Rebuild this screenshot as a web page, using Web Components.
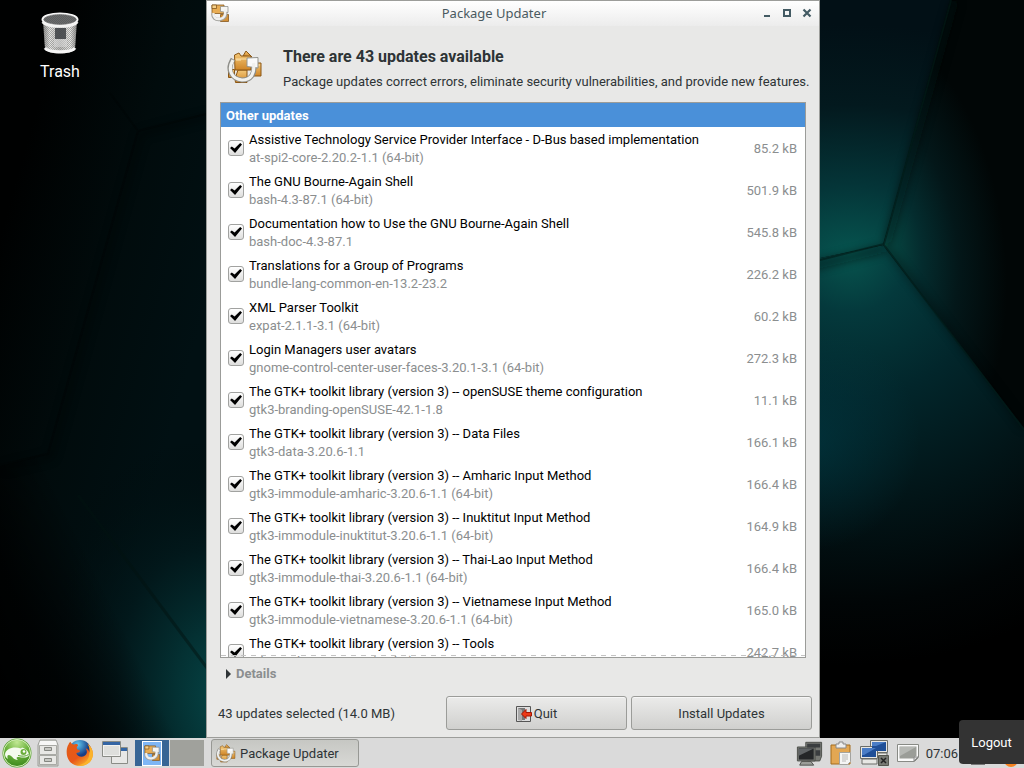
<!DOCTYPE html>
<html lang="en">
<head>
<meta charset="utf-8">
<title>Package Updater</title>
<style>
  html, body { margin: 0; height: 100%; }
  body { background: #000; font: 13px/18px Roboto, "Liberation Sans", sans-serif; font-variant-ligatures: none; color: #2e3436; overflow: hidden; }
</style>
</head>
<body>
<desk-top>
  <desk-shortcut icon="trash">Trash</desk-shortcut>
  <app-window slot="window" heading="Package Updater" icon="update">
    <updater-header heading="There are 43 updates available">Package updates correct errors, eliminate security vulnerabilities, and provide new features.</updater-header>
    <update-list heading="Other updates"></update-list>
    <details-toggle>Details</details-toggle>
    <action-bar>43 updates selected (14.0 MB)
      <push-button slot="actions" icon="exit">Quit</push-button>
      <push-button slot="actions">Install Updates</push-button>
    </action-bar>
  </app-window>
  <task-bar slot="panel"></task-bar>
</desk-top>

<script>
const define = (name, html, setup, observed = []) => {
  const template = document.createElement('template');
  template.innerHTML = html;
  customElements.define(name, class extends HTMLElement {
    static observedAttributes = observed;
    constructor() {
      super();
      this.attachShadow({ mode: 'open' }).append(template.content.cloneNode(true));
    }
    connectedCallback() { if (setup) setup(this, this.shadowRoot); }
    attributeChangedCallback() { if (this.isConnected) setup(this, this.shadowRoot); }
  });
};

const icons = {
  trash: ['0 0 40 44', `
    <defs>
      <pattern id="m" width="2" height="2" patternUnits="userSpaceOnUse"><path d="M0 0h1v1h-1zM1 1h1v1h-1z" fill="#777" opacity=".55"/></pattern>
      <linearGradient id="g"><stop offset="0" stop-color="#8c8c8a"/><stop offset=".2" stop-color="#e6e6e3"/><stop offset=".5" stop-color="#b9b9b6"/><stop offset=".8" stop-color="#e9e9e6"/><stop offset="1" stop-color="#858583"/></linearGradient>
    </defs>
    <path d="M3 9 L5 38 C8 44 32 44 35 38 L37 9Z" fill="url(#g)"/>
    <path d="M3 9 L5 38 C8 44 32 44 35 38 L37 9Z" fill="url(#m)"/>
    <path d="M15 17h11v11h-11z" fill="#3d4144" opacity=".85"/><path d="M14 28h13v8h-13z" fill="#ddd" opacity=".5"/>
    <path d="M5 37 C8 42 32 42 35 37" fill="none" stroke="#f6f6f6" stroke-width="3"/>
    <ellipse cx="20" cy="8.500" rx="17.500" ry="6" fill="#5d5f60" stroke="#f7f7f7" stroke-width="2"/>
    <ellipse cx="20" cy="8.500" rx="16" ry="5" fill="url(#m)" stroke="#777" stroke-width=".6"/>
    <path d="M2.500 11 C7 17 33 17 37.500 11" fill="none" stroke="#f3f3f2" stroke-width="2.500"/>`],
  packages: ['0 0 36 36', `
    <defs><linearGradient id="o" x2="0" y2="1"><stop offset="0" stop-color="#f4c878"/><stop offset="1" stop-color="#cf8527"/></linearGradient></defs>
    <g fill="url(#o)" stroke="#8a5716" stroke-width="1">
      <path d="M1.500 19.500h6v8h-6z"/><path d="M27 13h7v13h-7z"/><path d="M8 29 L11 20 H20 V32.500 H8.500Z"/><path d="M16 6 L19 1 L25 7Z"/>
      <path d="M7.500 5 L12 3 L14 6 L24 6 V20 H8 Z"/>
    </g>
    <path d="M8.500 9h14M9 10h5M28 15h5" stroke="#fbe3ae" stroke-width="1"/>
    <path d="M6 9 C-1 20 5 29 15 30 C24 30 28 24 27 14" fill="none" stroke="#8d8d88" stroke-width="5"/>
    <path d="M20 16.500 V8 L31 7.500 V18 Z" fill="#fafafa" stroke="#92928c" stroke-width="1"/>
    <path d="M6 10 C0 20 5 29 15 30 C24 30 28 24 26.500 13" fill="none" stroke="#f1f1ee" stroke-width="3.200"/>`],
  update: ['0 0 36 36', `
    <g stroke="#7f5117" stroke-width="1.500"><path d="M2 2h24v17h-24z" fill="#e8ad55"/><path d="M2 2h9v7h-9z" fill="#f5d08a"/><path d="M19 21h16v14h-16z" fill="#d39138"/></g>
    <path d="M26 5v13" stroke="#fbe3ae"/><path d="M4 19 C3 27 9 32 17 31 C27 30 31 24 29 13" fill="none" stroke="#a2a29d" stroke-width="7"/>
    <path d="M19 15V5h15v12Z" fill="#f5f5f3" stroke="#8b8b85" stroke-width="1.500"/>
    <path d="M5 18 C4 27 10 31 17 30 C26 29 30 23 28 11" fill="none" stroke="#f0f0ee" stroke-width="5"/>`],
  exit: ['0 0 16 16', `
    <path d="M.5 .5h14v15h-14z" fill="#ddd" stroke="#555"/><path d="M2 2h7v12h-7z" fill="#777"/><path d="M2 2 L6 4 V15 L2 14Z" fill="#aaa"/>
    <path d="M5.500 8 L10 3.500 V6.500 H15.500 V10 H10 V12.500Z" fill="#ee3a17" stroke="#a31605"/>`],
  suse: ['0 0 30 30', `
    <defs><radialGradient id="s" cx=".5" cy=".1" r=".9"><stop offset="0" stop-color="#c1e894"/><stop offset=".5" stop-color="#6db33e"/><stop offset="1" stop-color="#3d8a1d"/></radialGradient></defs>
    <circle cx="15" cy="15" r="14.500" fill="#56a02c"/><circle cx="15" cy="15" r="13.500" fill="url(#s)" stroke="#d6efbd"/>
    <path d="M3 16 C4 11 11 8 19 10.500 L20 9.500 C24 11 26.500 13 27 17 C26 20 22 20 17 19 C14 18.500 14 20 16 22 C11 22 11 18 7 17 C5 17 5 19 6 21 C4 20 3 18 3 16Z" fill="#f5fbef"/>
    <circle cx="21.500" cy="14" r="3" fill="#6bae3c"/><circle cx="22" cy="13.500" r="1.300" fill="#fff"/><path d="M16 17.500 C20 18.500 24 18.500 26.500 16.500" fill="none" stroke="#58a030"/>`],
  cabinet: ['0 0 22 28', `
    <path d="M3 1h16l2 5v21h-20v-21z" fill="#d3d4d0" stroke="#9c9d98"/><path d="M3 2h16l1 4h-18z" fill="#f7f7f6"/>
    <g fill="#e8e8e5" stroke="#a8a9a4"><path d="M2.500 6.500h17v9h-17zM2.500 16.500h17v9h-17z"/></g>
    <g fill="#c6c7c2" stroke="#858681"><path d="M7.500 8.500h7v3h-7zM7.500 19.500h7v3h-7z"/></g>`],
  firefox: ['0 0 30 30', `
    <defs><radialGradient id="b" cx=".4" cy=".2"><stop offset="0" stop-color="#61c7ef"/><stop offset="1" stop-color="#173e87"/></radialGradient>
    <linearGradient id="f" x2=".8" y2="1"><stop offset="0" stop-color="#e25d16"/><stop offset=".6" stop-color="#e8571a"/><stop offset="1" stop-color="#fbc02d"/></linearGradient></defs>
    <circle cx="15" cy="13" r="12" fill="url(#b)"/>
    <path d="M2 7 C3 6 3 4 5 3 C5 5 7 6 9 6 C12 5 12 5 13 7 C12 8 11 9 12 11 C14 12 15 12 15 13 C14 15 12 14 11 15 C12 19 17 20 20 18 C23 16 23 13 21 10 C24 11 25 13 25 15 C26 12 25 8 23 5 C29 9 31 18 26 24 C20 31 9 30 4 24 C0 19 0 12 2 7Z" fill="url(#f)"/>
    <path d="M25 15 C26 12 25 8 23 5 C29 9 31 18 26 24 C23 28 17 30 12 28 C20 28 25 22 25 15Z" fill="#fbb32b"/>`],
  windows: ['0 0 26 24', `
    <g stroke="#8a8c86"><path d="M9.500 6.500h16v16h-16z" fill="#e8e8e6"/><path d="M.5 .5h18v15h-18z" fill="#f1f1ef"/></g>
    <path d="M1 1h17v3h-17zM19 7h6v3h-6z" fill="#3465a4"/><path d="M2 5h15v9h-15z" fill="#dedfdc"/>`],
  monitors: ['0 0 29 27', `
    <g fill="#777974" stroke="#4a4c48"><path d="M10.500 1.500h17v15l-2 5h-13l-2-5z"/><path d="M1.500 6.500h19v15h-19z"/><path d="M6 22h10l3 4h-15z" fill="#9b9d98"/></g>
    <path d="M12 3h14v4h-14zM21 10h5v6h-5z" fill="#3a3d3f"/>
    <path d="M3 8h16v12h-16z" fill="#242628"/><path d="M3 8h16l-16 8z" fill="#5f6365"/>`],
  clipboard: ['0 0 22 25', `
    <path d="M1 4h19v19h-19z" fill="#e3a753" stroke="#a36d1e"/><path d="M6 3h3v-2h4v2h3v4h-10z" fill="#eee" stroke="#888"/>
    <path d="M9.500 11.500h11v9l-3 3h-8z" fill="#f5f5f4" stroke="#a3a39f"/><path d="M12 14h6M12 16h6M12 18h6M12 20h4" stroke="#aaa" stroke-width=".8"/>`],
  network: ['0 0 31 28', `
    <g fill="#e7e7e4" stroke="#6b6d68"><path d="M14 14h14v4h-14z"/><path d="M11.500 1.500h17v12h-17z"/><path d="M3 20h15v5h-15z"/><path d="M1.500 7.500h17v12h-17z"/></g>
    <path d="M13 3h14v9h-14zM3 9h14v9h-14z" fill="#1f4f97"/><path d="M13 3h14l-10 4h-4zM3 9h14l-12 7h-2z" fill="#4a7dc6"/>
    <path d="M19.500 16.500h10v10h-10z" fill="#777973" stroke="#55574f"/><path d="M22 19l5 5M27 19l-5 5" stroke="#222" stroke-width="1.500"/>`],
  note: ['0 0 22 18', `
    <path d="M.5 .5h21v13l-4 4h-17z" fill="#fafafa" stroke="#888a85"/><path d="M2.500 2.500h17v9l-3 3h-14z" fill="#9b9d98"/><path d="M3 3h16l-16 9z" fill="#b6b8b4"/><path d="M17 17v-4h4z" fill="#ddd" stroke="#888"/>`],
  wallpaper: ['0 0 1024 738', `
    <defs>
      <filter id="soft" x="-20%" y="-20%" width="140%" height="140%"><feGaussianBlur stdDeviation="4"/></filter>
      <radialGradient id="a" gradientUnits="userSpaceOnUse" cx="850" cy="255" r="330" gradientTransform="translate(850 255) scale(1 .7) translate(-850 -255)"><stop offset="0" stop-color="#06544f"/><stop offset=".3" stop-color="#043538"/><stop offset=".65" stop-color="#03191e"/><stop offset="1" stop-color="#021016"/></radialGradient>
      <radialGradient id="r" gradientUnits="userSpaceOnUse" cx="885" cy="245" r="140" gradientTransform="translate(885 245) rotate(-8) scale(.85 1.6) translate(-885 -245)"><stop offset="0" stop-color="#074a44"/><stop offset=".3" stop-color="#042c2e"/><stop offset=".6" stop-color="#031719"/><stop offset="1" stop-color="#010606"/></radialGradient>
      <radialGradient id="l" gradientUnits="userSpaceOnUse" cx="850" cy="255" r="410"><stop offset="0" stop-color="#07544e"/><stop offset=".14" stop-color="#04393c"/><stop offset=".35" stop-color="#02262b"/><stop offset=".6" stop-color="#021518"/><stop offset=".85" stop-color="#010506"/><stop offset="1" stop-color="#000"/></radialGradient>
      <radialGradient id="c" gradientUnits="userSpaceOnUse" cx="810" cy="440" r="110"><stop offset="0" stop-color="#013741" stop-opacity=".7"/><stop offset="1" stop-color="#013741" stop-opacity="0"/></radialGradient>
      <linearGradient id="w" gradientUnits="userSpaceOnUse" x1="10" y1="200" x2="220" y2="260"><stop offset="0" stop-color="#000101"/><stop offset=".5" stop-color="#010b0c"/><stop offset="1" stop-color="#011013"/></linearGradient>
      <radialGradient id="t" gradientUnits="userSpaceOnUse" cx="235" cy="705" r="270" gradientTransform="translate(235 705) rotate(-15) scale(.7 1) translate(-235 -705)"><stop offset="0" stop-color="#064a4b"/><stop offset=".3" stop-color="#043133"/><stop offset=".6" stop-color="#02191c" stop-opacity=".85"/><stop offset="1" stop-color="#010b0c" stop-opacity="0"/></radialGradient>
      <linearGradient id="k" gradientUnits="userSpaceOnUse" x1="0" y1="690" x2="125" y2="630"><stop offset="0" stop-color="#000"/><stop offset=".4" stop-color="#000" stop-opacity=".8"/><stop offset="1" stop-color="#000" stop-opacity="0"/></linearGradient>
    </defs>
    <path d="M0 0h512v738h-512z" fill="url(#w)"/>
    <path d="M0 430h500v308h-500z" fill="url(#t)"/><path d="M0 466 L50 454 L206 667 V738 H0Z" fill="url(#k)"/>
    <path d="M206 113 L138 131 L48 454 L0 465" transform="translate(3 3)" fill="none" stroke="#000" stroke-width="6" opacity=".35" filter="url(#soft)"/>
    <path d="M206 114 L138 131 L48 454 L0 465M138 131L110 93" fill="none" stroke="#000605" stroke-width="2" opacity=".4"/>
    <path d="M78 495 L210 672" fill="none" stroke="#01110f" stroke-width="3" opacity=".5"/>
    <path d="M512 0H951L883 245L512 322Z" fill="url(#a)"/>
    <path d="M950 0H1024V430L883 245Z" fill="url(#r)"/>
    <path d="M512 322L883 245L1024 428V738H512Z" fill="url(#l)"/><path d="M700 320h250v260h-250z" fill="url(#c)"/>
    <g fill="none" stroke="#010b0a" stroke-width="8" opacity=".5" filter="url(#soft)"><path d="M955 0L887 243"/><path d="M800 269L883 249"/><path d="M885 245L1024 428" stroke-width="4"/></g>
    <g fill="none" stroke="#021a18" stroke-width="2" opacity=".6"><path d="M951 0L884 244L800 265M884 245L1024 430"/></g>`]
};

/* Draws one named picture from the set above, sized by its user. */
define('ui-icon', `
  <style>:host { display: block; flex: none; } svg { display: block; width: 100%; height: 100%; }</style>
  <svg aria-hidden="true"></svg>`, (el, root) => {
  if (!el.hasAttribute('name')) return;
  const [box, art] = icons[el.getAttribute('name')];
  const svg = root.querySelector('svg');
  svg.setAttribute('viewBox', box);
  if (el.hasAttribute('stretch')) svg.setAttribute('preserveAspectRatio', 'none');
  svg.innerHTML = art;
}, ['name']);

define('desk-top', `
  <style>
    :host { display: grid; position: relative; height: 100vh; grid-template: minmax(0, 1fr) 30px / 206px minmax(0, 1fr) 204px; }
    .wall { grid-area: 1 / 1 / 2 / 4; min-height: 0; }
    .shortcuts { grid-area: 1 / 1; padding: 11px 0 0 20px; z-index: 1; }
    ::slotted([slot=window]) { grid-area: 1 / 2; z-index: 1; min-height: 0; }
    ::slotted([slot=panel]) { grid-area: 2 / 1 / 3 / 4; }
    .tip { position: absolute; right: 0; bottom: 4px; box-sizing: border-box; width: 65px; padding: 14px 0 12px; border-radius: 4px 0 0 4px; background: #333; color: #fff; text-align: center; z-index: 2; }
  </style>
  <ui-icon class="wall" name="wallpaper" stretch></ui-icon>
  <div class="shortcuts"><slot></slot></div>
  <slot name="window"></slot>
  <slot name="panel"></slot>
  <div class="tip" role="tooltip">Logout</div>`);

define('desk-shortcut', `
  <style>
    :host { display: block; width: 80px; }
    button { display: flex; flex-direction: column; align-items: center; gap: 7px; width: 100%; padding: 0; border: 0; background: none; font: 16px/20px Roboto, sans-serif; color: #fff; }
    ui-icon { width: 40px; height: 44px; }
  </style>
  <button type="button"><ui-icon></ui-icon><slot></slot></button>`, (el, root) => {
  root.querySelector('ui-icon').setAttribute('name', el.getAttribute('icon'));
});

define('app-window', `
  <style>
    :host { display: flex; flex-direction: column; box-sizing: border-box; border: 1px solid #9c9d9a; background: #e8e8e7; }
    header { display: flex; align-items: center; height: 25px; flex: none; box-sizing: border-box; padding: 0 2px 1px 4px; background: linear-gradient(#fff, #ececec); color: #4a5a60; }
    header ui-icon { width: 18px; height: 18px; }
    h1 { flex: 1; margin: 0; padding-left: 2px; font: 13px/18px "Noto Sans", sans-serif; text-align: center; }
    header button { display: grid; place-items: center; width: 20px; height: 20px; padding: 0; border: 0; background: none; color: #435a63; }
    header svg { width: 10px; height: 10px; }
    main { display: flex; flex-direction: column; flex: 1; min-height: 0; padding: 15px 7px 7px 11px; }
  </style>
  <header>
    <ui-icon></ui-icon>
    <h1></h1>
    <button type="button" aria-label="Minimize"><svg viewBox="0 0 10 10"><path d="M2 7h6v2h-6z" fill="currentColor"/></svg></button>
    <button type="button" aria-label="Maximize"><svg viewBox="0 0 10 10"><path d="M2 2h6v6h-6z" fill="none" stroke="currentColor" stroke-width="2"/></svg></button>
    <button type="button" aria-label="Close"><svg viewBox="0 0 10 10"><path d="M1.500 1.500l7 7M8.500 1.500l-7 7" stroke="currentColor" stroke-width="2.200"/></svg></button>
  </header>
  <main><slot></slot></main>`, (el, root) => {
  root.querySelector('ui-icon').setAttribute('name', el.getAttribute('icon'));
  root.querySelector('h1').textContent = el.getAttribute('heading');
});

define('updater-header', `
  <style>
    :host { display: flex; align-items: center; gap: 20px; padding: 4px 0 11px 9px; }
    ui-icon { width: 36px; height: 36px; }
    h2 { margin: 0 0 4px; font-size: 16px; line-height: 24px; }
    p { margin: 0; }
  </style>
  <ui-icon name="packages"></ui-icon>
  <div><h2></h2><p><slot></slot></p></div>`, (el, root) => {
  root.querySelector('h2').textContent = el.getAttribute('heading');
});

const updates = [
  ['Assistive Technology Service Provider Interface - D-Bus based implementation', 'at-spi2-core-2.20.2-1.1 (64-bit)', '85.2 kB'],
  ['The GNU Bourne-Again Shell', 'bash-4.3-87.1 (64-bit)', '501.9 kB'],
  ['Documentation how to Use the GNU Bourne-Again Shell', 'bash-doc-4.3-87.1', '545.8 kB'],
  ['Translations for a Group of Programs', 'bundle-lang-common-en-13.2-23.2', '226.2 kB'],
  ['XML Parser Toolkit', 'expat-2.1.1-3.1 (64-bit)', '60.2 kB'],
  ['Login Managers user avatars', 'gnome-control-center-user-faces-3.20.1-3.1 (64-bit)', '272.3 kB'],
  ['The GTK+ toolkit library (version 3) -- openSUSE theme configuration', 'gtk3-branding-openSUSE-42.1-1.8', '11.1 kB'],
  ['The GTK+ toolkit library (version 3) -- Data Files', 'gtk3-data-3.20.6-1.1', '166.1 kB'],
  ['The GTK+ toolkit library (version 3) -- Amharic Input Method', 'gtk3-immodule-amharic-3.20.6-1.1 (64-bit)', '166.4 kB'],
  ['The GTK+ toolkit library (version 3) -- Inuktitut Input Method', 'gtk3-immodule-inuktitut-3.20.6-1.1 (64-bit)', '164.9 kB'],
  ['The GTK+ toolkit library (version 3) -- Thai-Lao Input Method', 'gtk3-immodule-thai-3.20.6-1.1 (64-bit)', '166.4 kB'],
  ['The GTK+ toolkit library (version 3) -- Vietnamese Input Method', 'gtk3-immodule-vietnamese-3.20.6-1.1 (64-bit)', '165.0 kB'],
  ['The GTK+ toolkit library (version 3) -- Tools', 'gtk3-tools-3.20.6-1.1 (64-bit)', '242.7 kB']
];

define('update-list', `
  <style>
    :host { display: block; position: relative; flex: 1; min-height: 0; margin: 0 6px 0 2px; box-sizing: border-box; border: 1px solid #9b9c99; background: #fff; overflow: hidden; }
    :host::after { content: ""; position: absolute; left: 0; right: 0; bottom: 1px; height: 1px; background: repeating-linear-gradient(90deg, #c4c4c4 0 5px, transparent 5px 10px); }
    table { width: 100%; border-collapse: collapse; }
    th { height: 22px; padding: 2px 5px 0; background: #4a90d9; color: #fff; text-align: left; }
    td { height: 36px; padding: 4px 0 2px; }
    .pick { width: 28px; padding: 3px 0; }
    .size { padding-right: 8px; text-align: right; color: #8b8e8f; }
    input { display: grid; place-items: center; appearance: none; box-sizing: border-box; width: 16px; height: 16px; margin: 0 0 0 7px; border: 1px solid #a1a2a0; border-radius: 3px; background: linear-gradient(#fff, #dededd); }
    input:checked::before { content: ""; width: 12px; height: 10px; background: #000; clip-path: polygon(0 50%, 15% 34%, 38% 56%, 85% 0, 100% 16%, 42% 100%); }
    label { display: block; color: #000; }
    small { display: block; font-size: 13px; color: #8b8e8f; }
  </style>
  <table><thead><tr><th colspan="3" scope="colgroup"></th></tr></thead><tbody></tbody></table>`, (el, root) => {
  root.querySelector('th').textContent = el.getAttribute('heading');
  root.querySelector('tbody').innerHTML = updates.map(([name, pkg, size], i) => `
    <tr><td class="pick"><input type="checkbox" id="u${i}" checked></td>
    <td><label for="u${i}">${name}</label><small>${pkg}</small></td>
    <td class="size">${size}</td></tr>`).join('');
});

define('details-toggle', `
  <style>
    :host { display: block; padding: 7px 0 13px 8px; }
    button { display: flex; align-items: center; gap: 5px; padding: 0; border: 0; background: none; font: bold 13px/18px Roboto, sans-serif; color: #8b8e8f; }
    svg { width: 5px; height: 10px; }
  </style>
  <button type="button" aria-expanded="false"><svg viewBox="0 0 5 10"><path d="M0 0l5 5l-5 5z" fill="#2e3436"/></svg><slot></slot></button>`);

define('action-bar', `
  <style>
    :host { display: flex; align-items: center; justify-content: space-between; }
    .status { padding-top: 2px; }
    .actions { display: flex; gap: 4px; }
  </style>
  <span class="status"><slot></slot></span><div class="actions"><slot name="actions"></slot></div>`);

define('push-button', `
  <style>
    :host { display: block; width: 181px; }
    button { display: flex; align-items: center; justify-content: center; gap: 2px; box-sizing: border-box; width: 100%; height: 34px; padding: 2px 0 0; border: 1px solid #9b9c99; border-radius: 3px; background: linear-gradient(#ebebea, #d0d0ce); box-shadow: inset 0 1px #f6f6f6; font: inherit; color: inherit; }
    ui-icon { width: 16px; height: 16px; }
  </style>
  <button type="button"><slot></slot></button>`, (el, root) => {
  if (!el.hasAttribute('icon')) return;
  const icon = document.createElement('ui-icon');
  icon.setAttribute('name', el.getAttribute('icon'));
  root.querySelector('button').prepend(icon);
});

define('task-bar', `
  <style>
    :host { display: flex; justify-content: space-between; align-items: center; background: #dadada; overflow: hidden; }
    nav, .tray { display: flex; align-items: center; }
    nav { padding-left: 2px; }
    .tray { gap: 7px; padding-right: 6px; }
    time { padding-top: 2px; }
    button { display: grid; place-items: center; padding: 0; border: 0; background: none; font: inherit; color: inherit; }
    .suse { width: 30px; height: 30px; }
    .cab { width: 22px; height: 28px; margin: 0 7px 0 5px; }
    .fox { width: 28px; height: 28px; }
    .win { width: 26px; height: 24px; margin: 0 7px 0 8px; }
    .pager { display: flex; gap: 1px; }
    .pager button { width: 34px; height: 26px; background: #a0a19c; }
    .pager .here { background: #376595; }
    .here span { display: grid; place-items: center; box-sizing: border-box; width: 20px; height: 25px; border: 1px solid #fff; background: #7eb6f5; }
    .here ui-icon { width: 16px; height: 16px; }
    .task { display: flex; gap: 4px; box-sizing: border-box; width: 148px; height: 28px; margin-left: 7px; padding: 2px 4px 0; border: 1px solid #979894; border-radius: 3px; background: linear-gradient(#c6c7c3, #d8d8d5); }
    .task ui-icon { width: 20px; height: 20px; }
    .mon { width: 27px; height: 27px; } .clip { width: 22px; height: 25px; } .net { width: 31px; height: 28px; } .note { width: 22px; height: 18px; }
    .lock { align-self: end; width: 14px; height: 5px; margin: 0 12px 2px 6px; border: 1px solid #777; box-sizing: border-box; background: #eee; }
    .power { align-self: end; width: 14px; height: 14px; border-radius: 7px; background: #f58220; }
  </style>
  <nav>
    <button type="button" aria-label="Menu"><ui-icon class="suse" name="suse"></ui-icon></button>
    <button type="button" aria-label="Files"><ui-icon class="cab" name="cabinet"></ui-icon></button>
    <button type="button" aria-label="Firefox"><ui-icon class="fox" name="firefox"></ui-icon></button>
    <button type="button" aria-label="Show desktop"><ui-icon class="win" name="windows"></ui-icon></button>
    <div class="pager">
      <button type="button" class="here" aria-label="Desktop 1"><span><ui-icon name="update"></ui-icon></span></button>
      <button type="button" aria-label="Desktop 2"></button>
    </div>
    <button type="button" class="task"><ui-icon name="packages"></ui-icon>Package Updater</button>
  </nav>
  <div class="tray">
    <ui-icon class="mon" name="monitors"></ui-icon>
    <ui-icon class="clip" name="clipboard"></ui-icon>
    <ui-icon class="net" name="network"></ui-icon>
    <ui-icon class="note" name="note"></ui-icon>
    <time>07:06</time>
    <span class="lock"></span>
    <span class="power"></span>
  </div>`);
</script>
</body>
</html>
